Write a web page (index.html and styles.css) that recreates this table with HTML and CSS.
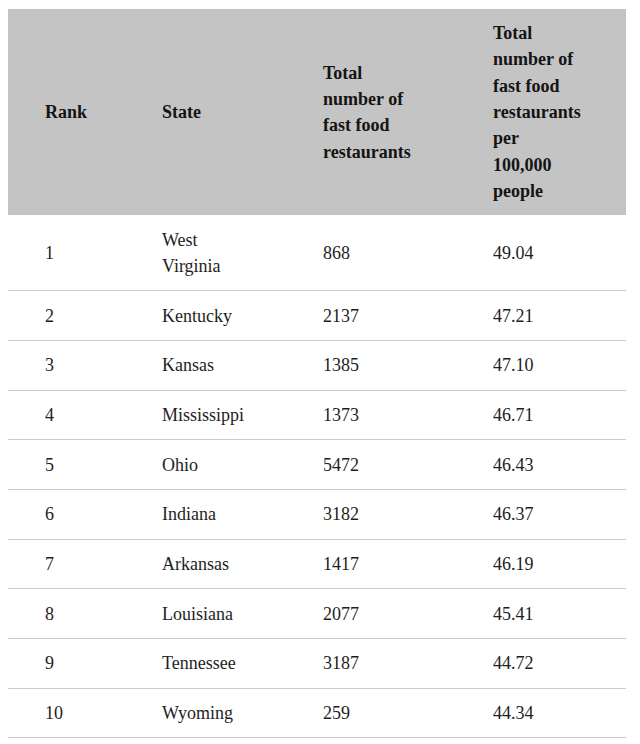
FILE: index.html
```html
<!DOCTYPE html>
<html>
<head>
<meta charset="utf-8">
<link rel="stylesheet" href="styles.css">
</head>
<body>
<table class="ranking">
  <colgroup>
    <col class="c-rank">
    <col class="c-state">
    <col class="c-total">
    <col class="c-per">
  </colgroup>
  <thead>
    <tr>
      <th>Rank</th>
      <th>State</th>
      <th>Total<br>number of<br>fast food<br>restaurants</th>
      <th>Total<br>number of<br>fast food<br>restaurants<br>per<br>100,000<br>people</th>
    </tr>
  </thead>
  <tbody>
    <tr><td>1</td><td>West<br>Virginia</td><td>868</td><td>49.04</td></tr>
    <tr><td>2</td><td>Kentucky</td><td>2137</td><td>47.21</td></tr>
    <tr><td>3</td><td>Kansas</td><td>1385</td><td>47.10</td></tr>
    <tr><td>4</td><td>Mississippi</td><td>1373</td><td>46.71</td></tr>
    <tr><td>5</td><td>Ohio</td><td>5472</td><td>46.43</td></tr>
    <tr><td>6</td><td>Indiana</td><td>3182</td><td>46.37</td></tr>
    <tr><td>7</td><td>Arkansas</td><td>1417</td><td>46.19</td></tr>
    <tr><td>8</td><td>Louisiana</td><td>2077</td><td>45.41</td></tr>
    <tr><td>9</td><td>Tennessee</td><td>3187</td><td>44.72</td></tr>
    <tr><td>10</td><td>Wyoming</td><td>259</td><td>44.34</td></tr>
  </tbody>
</table>
</body>
</html>
```
FILE: styles.css
```css
body {
  margin: 9px 8px 8px 8px;
  background: #ffffff;
  font-family: "Liberation Serif", "Times New Roman", serif;
  color: #1e1e1e;
}

.ranking {
  width: 618px;
  table-layout: fixed;
  border-collapse: collapse;
  border-spacing: 0;
  font-size: 18px;
  line-height: 26.3px;
}

.c-rank { width: 117px; }
.c-state { width: 161px; }
.c-total { width: 170px; }
.c-per { width: 170px; }

.ranking th,
.ranking td {
  padding: 11.2px 8px 11.2px 37px;
  text-align: left;
  vertical-align: middle;
}

.ranking thead th {
  background: #c4c4c4;
  font-weight: bold;
  color: #141414;
}

.ranking tbody td {
  border-bottom: 1px solid #cbcbcb;
}
```
